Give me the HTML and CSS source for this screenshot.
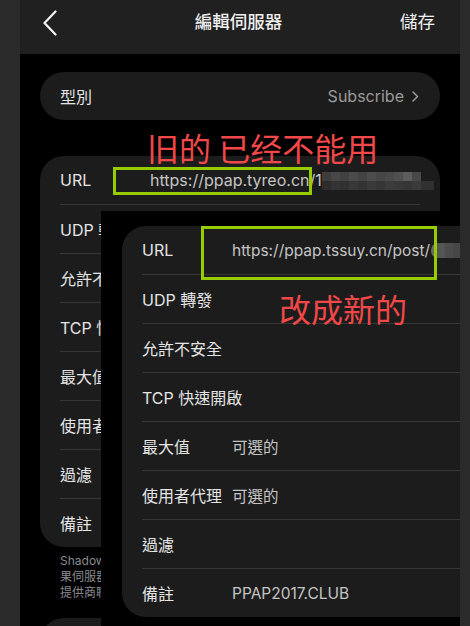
FILE: index.html
```html
<!DOCTYPE html>
<html>
<head>
  <meta charset="utf-8">
  <title>編輯伺服器</title>
  <link rel="stylesheet" href="styles.css">
</head>
<body>
<div class="device">
  <div class="screen">
    <header class="navbar">
      <svg class="back" width="16" height="26" viewBox="0 0 16 26">
        <polyline points="13.5,1.5 2.5,13 13.5,24.5" fill="none" stroke="#f2f2f2" stroke-width="2.2" stroke-linecap="round" stroke-linejoin="round"/>
      </svg>
      <h1>編輯伺服器</h1>
      <span class="save">儲存</span>
    </header>

    <main class="content">
      <div class="card type">
        <span class="label">型別</span>
        <span class="type-value">Subscribe
          <svg width="7" height="11" viewBox="0 0 7 11"><polyline points="1,1 5.5,5.5 1,10" fill="none" stroke="#9a9a9a" stroke-width="1.5" stroke-linecap="round" stroke-linejoin="round"/></svg>
        </span>
      </div>

      <div class="card list">
        <div class="row"><span class="label">URL</span><span class="value">https://ppap.tyreo.cn/1</span><span class="pixels pixels-old"></span></div>
        <div class="row"><span class="label">UDP 轉發</span></div>
        <div class="row"><span class="label">允許不安全</span></div>
        <div class="row"><span class="label">TCP 快速開啟</span></div>
        <div class="row"><span class="label">最大值</span><span class="value">可選的</span></div>
        <div class="row"><span class="label">使用者代理</span><span class="value">可選的</span></div>
        <div class="row"><span class="label">過濾</span></div>
        <div class="row"><span class="label">備註</span></div>
      </div>

      <p class="footnote">Shadow<br>果伺服器<br>提供商聯</p>

      <div class="card next"></div>
    </main>
  </div>

  <!-- second screenshot laid over the first -->
  <div class="shot">
    <div class="card list">
      <div class="row"><span class="label">URL</span><span class="value">https://ppap.tssuy.cn/post/</span><span class="pixels pixels-new"></span></div>
      <div class="row"><span class="label">UDP 轉發</span></div>
      <div class="row"><span class="label">允許不安全</span></div>
      <div class="row"><span class="label">TCP 快速開啟</span></div>
      <div class="row"><span class="label">最大值</span><span class="value">可選的</span></div>
      <div class="row"><span class="label">使用者代理</span><span class="value">可選的</span></div>
      <div class="row"><span class="label">過濾</span></div>
      <div class="row"><span class="label">備註</span><span class="value">PPAP2017.CLUB</span></div>
    </div>
  </div>

  <div class="box box-old"></div>
  <div class="box box-new"></div>
  <div class="note note-old">旧的 已经不能用</div>
  <div class="note note-new">改成新的</div>
</div>
</body>
</html>
```

FILE: styles.css
```css
body {
  margin: 0;
  background: #2a2a2a;
  font-family: Inter, "Noto Sans CJK TC", sans-serif;
}
.device {
  position: relative;
  width: 470px;
  height: 626px;
  overflow: hidden;
}
.screen {
  margin-left: 20px;
  width: 440px;
  height: 626px;
  background: #000;
}

/* top bar */
.navbar {
  height: 54px;
  box-sizing: border-box;
  background: #202020;
  display: grid;
  grid-template-columns: 1fr auto 1fr;
  align-items: start;
  padding: 10px 25px 0 22px;
  color: #f0f0f0;
}
.navbar h1 {
  margin: 0;
  font-size: 17.5px;
  font-weight: 500;
  line-height: 24px;
}
.back { display: block; }
.save {
  justify-self: end;
  font-size: 17.5px;
  line-height: 24px;
}

.content { padding: 18px 20px 0; }
.card {
  background: #1c1c1c;
  border-radius: 24px;
}
.type {
  height: 48px;
  display: flex;
  align-items: center;
  justify-content: space-between;
  padding: 0 21px 0 20px;
  font-size: 16px;
  color: #e4e4e4;
}
.type-value {
  color: #9a9a9a;
  display: flex;
  align-items: center;
  gap: 8px;
}
.list { margin-top: 36px; }
.row {
  display: flex;
  align-items: center;
  height: 48px;
  margin: 0 20px;
  border-bottom: 1px solid #363636;
  font-size: 16px;
  color: #e4e4e4;
  white-space: nowrap;
}
.row:last-child { border-bottom: none; }
.label {
  width: 90px;
  flex-shrink: 0;
}
.value { color: #c4c4c4; }

/* blurred rest of the address */
.pixels {
  display: inline-block;
  flex-shrink: 0;
}
.pixels-old {
  width: 112px;
  height: 18px;
  margin-top: 2px;
  background:
    linear-gradient(90deg, #3d3d3d 0 9px, #474747 9px 18px, #414141 18px 27px, #4b4b4b 27px 36px, #444 36px 45px, #4d4d4d 45px 54px, #464646 54px 63px, #4a4a4a 63px 72px, #505050 72px 81px, #5c5c5c 81px 90px, #484848 90px 99px, #1c1c1c 99px) top / 100% 9px no-repeat,
    linear-gradient(90deg, #2c2c2c 0 9px, #343434 9px 18px, #303030 18px 27px, #383838 27px 36px, #333 36px 45px, #3a3a3a 45px 54px, #363636 54px 63px, #3c3c3c 63px 72px, #393939 72px 81px, #353535 81px 90px, #3b3b3b 90px 99px, #303030 99px 112px) bottom / 100% 9px no-repeat;
}
.pixels-new {
  width: 44px;
  height: 15px;
  margin-left: 1px;
  border-radius: 7px 0 0 7px;
  background: linear-gradient(90deg, #6a6a6a 0 6px, #555 6px 14px, #4c4c4c 14px 22px, #474747 22px 30px, #424242 30px);
}

.footnote {
  margin: 6px 20px 0;
  font-size: 12px;
  line-height: 16px;
  color: #8a8a8e;
  white-space: nowrap;
  width: 41px;
  overflow: hidden;
}
.next {
  margin-top: 17px;
  height: 60px;
}

/* overlaid screenshot */
.shot {
  position: absolute;
  left: 101px;
  top: 211px;
  width: 359px;
  height: 415px;
  background: #000;
  overflow: hidden;
}
.shot .list {
  margin: 15px 0 0 21px;
  width: 420px;
}
.shot .row { margin: 0 0 0 20px; }
.shot .value { font-size: 15.5px; }

/* annotations */
.box {
  position: absolute;
  box-sizing: border-box;
  border: 3px solid #96cc00;
}
.box-old { left: 113px; top: 167px; width: 199px; height: 28px; }
.box-new { left: 201px; top: 226px; width: 236px; height: 54px; }
.note {
  position: absolute;
  color: #f04848;
  font-family: "Noto Sans CJK SC", sans-serif;
  font-size: 32px;
  line-height: 32px;
  white-space: nowrap;
}
.note-old { left: 147px; top: 131px; }
.note-new { left: 279px; top: 292px; }
```
